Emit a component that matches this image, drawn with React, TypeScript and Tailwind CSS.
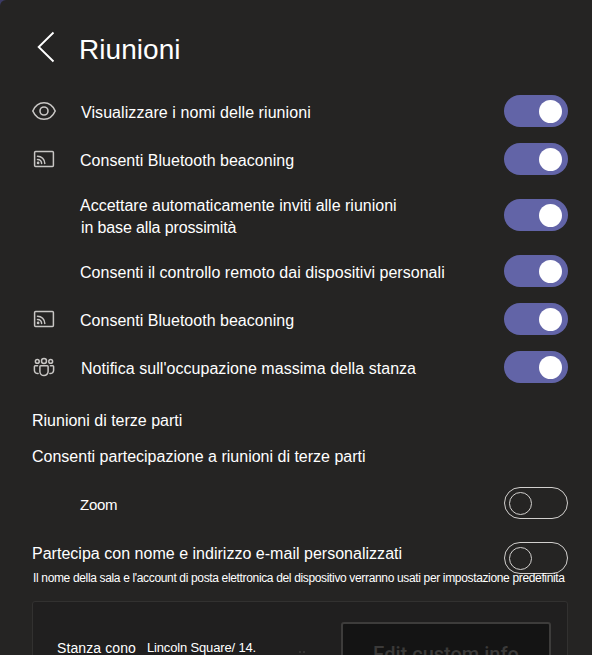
import React from "react";

const stroke = { fill: "none", stroke: "#c8c6c4", strokeLinecap: "round", strokeLinejoin: "round" } as const;

function EyeIcon() {
  return (
    <svg width="26" height="20" viewBox="0 0 26 20" {...stroke} strokeWidth="1.6">
      <path d="M1.800 10C4.200 4.600 8.300 1.800 13 1.800S21.800 4.600 24.200 10C21.800 15.400 17.700 18.200 13 18.200S4.200 15.400 1.800 10Z" />
      <circle cx="13" cy="10" r="4" />
    </svg>
  );
}

function CastIcon() {
  return (
    <svg width="22" height="18" viewBox="0 0 22 18" {...stroke} strokeWidth="1.5">
      <rect x="1.600" y="1.600" width="18.800" height="14.800" rx="1" />
      <path d="M4.500 6.200a7.300 7.300 0 0 1 7.300 7.300M4.500 9.400a4.100 4.100 0 0 1 4.100 4.100" />
      <circle cx="5.100" cy="12.900" r="0.600" fill="#c8c6c4" />
    </svg>
  );
}

function PeopleIcon() {
  return (
    <svg width="22" height="20" viewBox="0 0 22 20" {...stroke} strokeWidth="1.5">
      <circle cx="11" cy="4" r="2.500" />
      <circle cx="4.300" cy="4.400" r="1.900" />
      <circle cx="17.700" cy="4.400" r="1.900" />
      <path d="M7.700 8.700h6.600c.5 0 .8.3.8.8v5a4.100 4.100 0 0 1-8.200 0v-5c0-.5.3-.8.8-.8Z" />
      <path d="M4.600 8.700H2.200c-.5 0-.8.3-.8.8v3.700c0 2 1.500 3.500 3.700 3.400M17.400 8.700h2.400c.5 0 .8.3.8.8v3.700c0 2-1.500 3.500-3.700 3.400" />
    </svg>
  );
}

function Toggle({ on = false, label }: { on?: boolean; label: string }) {
  return on ? (
    <button role="switch" aria-checked="true" aria-label={label} className="flex h-8 w-16 shrink-0 items-center justify-end rounded-full bg-[#6264a7] pr-1.5">
      <span className="size-[23px] rounded-full bg-white" />
    </button>
  ) : (
    <button role="switch" aria-checked="false" aria-label={label} className="flex h-8 w-16 shrink-0 items-center rounded-full border border-[#d2d0ce] pl-[4px]">
      <span className="size-[23px] rounded-full border border-[#d2d0ce]" />
    </button>
  );
}

type Row = { icon?: React.ReactNode; text: React.ReactNode; label: string; row: string; textClass: string };

const rows: Row[] = [
  { icon: <EyeIcon />, text: "Visualizzare i nomi delle riunioni", label: "Nomi", row: "h-12", textClass: "pl-px tracking-[0.07px]" },
  { icon: <CastIcon />, text: "Consenti Bluetooth beaconing", label: "Bluetooth", row: "h-12", textClass: "tracking-[0.02px]" },
  {
    text: (<>Accettare automaticamente inviti alle riunioni<br /><span className="pl-px tracking-[-0.13px]">in base alla prossimità</span></>),
    label: "Inviti",
    row: "h-16",
    textClass: "",
  },
  { text: "Consenti il controllo remoto dai dispositivi personali", label: "Controllo remoto", row: "h-12", textClass: "tracking-[0.035px]" },
  { icon: <CastIcon />, text: "Consenti Bluetooth beaconing", label: "Bluetooth", row: "h-12", textClass: "tracking-[0.02px]" },
  { icon: <PeopleIcon />, text: "Notifica sull'occupazione massima della stanza", label: "Occupazione", row: "h-12", textClass: "pl-px tracking-[0.045px]" },
];

export default function App() {
  return (
    <div className="h-[655px] w-[592px] overflow-hidden bg-[#3b3a64] font-['Liberation_Sans',Arial,sans-serif] text-base text-white">
      <main className="flex h-full flex-col overflow-hidden rounded-tl-[6px] bg-[#252423] px-6 pl-8">
        <header className="flex h-[87px] shrink-0 items-start">
          <svg className="mt-[30px] ml-[4px] shrink-0" width="20" height="34" viewBox="0 0 20 34" fill="none" stroke="#fff" strokeWidth="1.900">
            <path d="M17.500 2.500 2.700 17l14.800 14.500" />
          </svg>
          <h1 className="mt-[34px] ml-[23px] text-[28px] leading-8 tracking-[0.05px]">Riunioni</h1>
        </header>

        {rows.map((r, i) => (
          <div key={i} className={`flex shrink-0 items-center ${r.row}`}>
            <div className="flex w-6 shrink-0 items-center justify-center [&>svg]:shrink-0">{r.icon}</div>
            <p className={`ml-6 mt-[3px] flex-1 whitespace-nowrap leading-[22px] ${r.textClass}`}>{r.text}</p>
            <Toggle on label={r.label} />
          </div>
        ))}

        <h2 className="mt-[19px] shrink-0 leading-[22px]">Riunioni di terze parti</h2>
        <p className="mt-[14px] shrink-0 leading-[22px]">Consenti partecipazione a riunioni di terze parti</p>

        <div className="mt-[18px] flex h-[34px] shrink-0 items-center pl-12">
          <p className="mt-[3px] flex-1 text-[15px] leading-5 tracking-[-0.25px]">Zoom</p>
          <Toggle label="Zoom" />
        </div>

        <div className="mt-[22px] flex h-[28px] shrink-0 items-start">
          <p className="mt-px flex-1 whitespace-nowrap leading-[22px] tracking-[0.02px]">Partecipa con nome e indirizzo e-mail personalizzati</p>
          <Toggle label="Partecipa con nome" />
        </div>
        <p className="relative shrink-0 whitespace-nowrap pl-px text-[12px] leading-4 tracking-[-0.345px]">
          Il nome della sala e l'account di posta elettronica del dispositivo verranno usati per impostazione predefinita
        </p>

        <section className="mt-[15px] flex h-24 shrink-0 items-start rounded-[3px] border border-[#323130] bg-[#201f1f] pl-6 pr-4">
          <span className="mt-[38px] w-[90px] whitespace-nowrap text-[14px] leading-4 tracking-[0.1px]">Stanza cono</span>
          <span className="mt-[38px] whitespace-nowrap text-[13px] leading-4 tracking-[-0.16px]">Lincoln Square/ 14.</span>
          <span className="mt-[49px] ml-[43px] flex gap-[2px]" aria-hidden="true">
            <i className="size-[2px] bg-[#343332]" />
            <i className="size-[2px] bg-[#343332]" />
          </span>
          <button className="mt-5 ml-auto h-16 w-[210px] rounded-[3px] border-2 border-[#3d3c3b] bg-[#141414] font-[Roboto,sans-serif] text-[20px] font-medium text-[#3b3a39]">
            Edit custom info
          </button>
        </section>
      </main>
    </div>
  );
}
